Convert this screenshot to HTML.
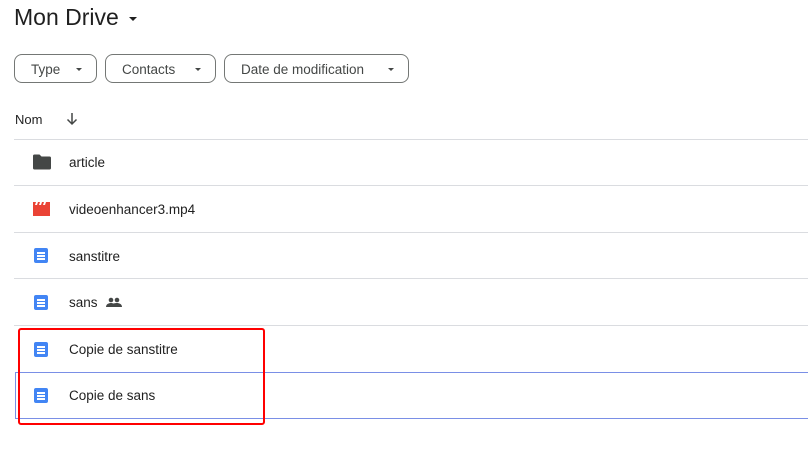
<!DOCTYPE html>
<html><head><style>
body{margin:0;width:808px;height:450px;background:#fff;font-family:"Liberation Sans",sans-serif;color:#1f1f1f;position:relative;overflow:hidden}
.a{position:absolute}
.chip{position:absolute;top:54px;height:29px;border:1px solid #747775;border-radius:8px;box-sizing:border-box;font-size:13.5px;color:#444746;line-height:29px;padding-left:16px}
.chip i{position:absolute;right:14px;top:13px;border-left:3.5px solid transparent;border-right:3.5px solid transparent;border-top:3.5px solid #444746}
.line{position:absolute;left:14px;right:0;height:1px;background:#dadce0}
.row{position:absolute;left:69px;font-size:13.5px;color:#1f1f1f}
.doc{position:absolute;left:34px;width:14px;height:15px;background:#4285f4;border-radius:2px}
.doc b{position:absolute;left:3px;width:8px;height:1.5px;background:#fff}
</style></head><body>
<div class="a" style="left:14px;top:4px;font-size:23px;color:#1f1f1f">Mon Drive</div>
<div class="a" style="left:129px;top:17px;border-left:4px solid transparent;border-right:4px solid transparent;border-top:4px solid #1f1f1f"></div>
<div class="chip" style="left:14px;width:83px">Type<i></i></div>
<div class="chip" style="left:105px;width:111px">Contacts<i></i></div>
<div class="chip" style="left:224px;width:185px">Date de modification<i></i></div>
<div class="a" style="left:15px;top:112px;font-size:13px">Nom</div>
<svg class="a" style="left:65px;top:112px" width="14" height="14" viewBox="0 0 14 14"><path d="M7 1v11M2.5 7.5 7 12l4.5-4.5" stroke="#444746" stroke-width="1.5" fill="none"/></svg>
<div class="line" style="top:139px"></div>
<div class="line" style="top:185px"></div>
<div class="line" style="top:232px"></div>
<div class="line" style="top:278px"></div>
<div class="line" style="top:325px"></div>
<div class="a" style="left:15px;top:372px;right:0;height:45px;border:1px solid #7a8fe6;border-right:none"></div>
<svg class="a" style="left:32px;top:154px" width="20" height="16" viewBox="0 0 20 16"><path d="M1 2a1.5 1.5 0 0 1 1.5-1.5h5l2 2h8A1.5 1.5 0 0 1 19 4v10a1.5 1.5 0 0 1-1.5 1.5h-15A1.5 1.5 0 0 1 1 14z" fill="#444746"/></svg>
<div class="row" style="top:155px">article</div>
<svg class="a" style="left:33px;top:202px" width="17" height="14" viewBox="0 0 17 14"><path d="M0 0h17v14H0z" fill="#ea4335"/><path d="M3 0l-1 3h2l1-3zM7 0l-1 3h2l1-3zM11 0l-1 3h2l1-3z" fill="#fff"/></svg>
<div class="row" style="top:202px">videoenhancer3.mp4</div>
<div class="doc" style="top:248px"><b style="top:4px"></b><b style="top:7px"></b><b style="top:10px"></b></div>
<div class="row" style="top:249px">sanstitre</div>
<div class="doc" style="top:295px"><b style="top:4px"></b><b style="top:7px"></b><b style="top:10px"></b></div>
<div class="row" style="top:295px">sans</div>
<svg class="a" style="left:106px;top:297px" width="16" height="11" viewBox="0 0 16 11"><circle cx="5" cy="3" r="2.3" fill="#444746"/><circle cx="11" cy="3" r="2.3" fill="#444746"/><path d="M0 10c0-3 3-4 5-4s5 1 5 4zM9 10c0-2-1-3-1.5-3.5C9 6 10 6 11 6c2 0 5 1 5 4z" fill="#444746"/></svg>
<div class="doc" style="top:342px"><b style="top:4px"></b><b style="top:7px"></b><b style="top:10px"></b></div>
<div class="row" style="top:342px">Copie de sanstitre</div>
<div class="doc" style="top:388px"><b style="top:4px"></b><b style="top:7px"></b><b style="top:10px"></b></div>
<div class="row" style="top:388px">Copie de sans</div>
<div class="a" style="left:18px;top:328px;width:243px;height:93px;border:2px solid #f00;border-radius:3px"></div>
</body></html>
